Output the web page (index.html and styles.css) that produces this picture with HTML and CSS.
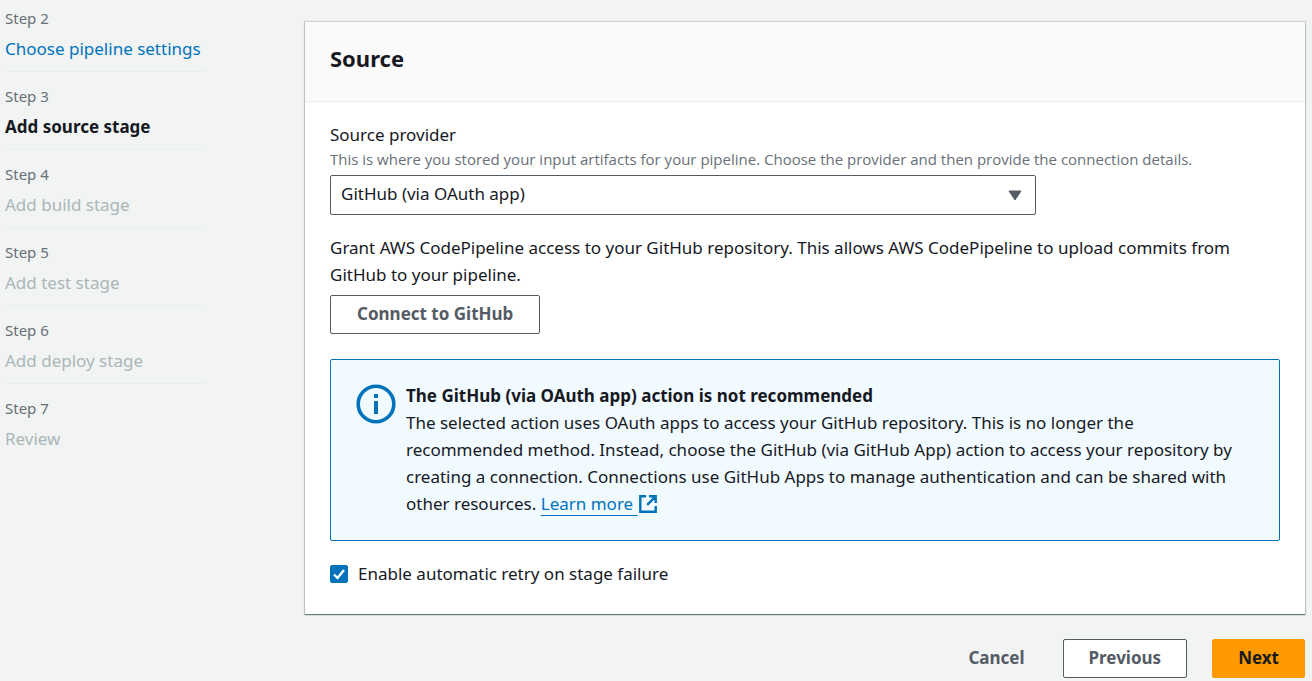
FILE: index.html
```html
<!DOCTYPE html>
<html lang="en">
<head>
<meta charset="utf-8">
<title>Add source stage</title>
<link rel="stylesheet" href="styles.css">
</head>
<body>
<div class="layout">
  <nav class="steps" aria-label="Steps">
    <ol class="step-list">
      <li class="step"><span class="step-label">Step 2</span><a class="step-name step-link" href="#settings">Choose pipeline settings</a></li>
      <li class="step" aria-current="step"><span class="step-label">Step 3</span><span class="step-name step-current">Add source stage</span></li>
      <li class="step"><span class="step-label">Step 4</span><span class="step-name">Add build stage</span></li>
      <li class="step"><span class="step-label">Step 5</span><span class="step-name">Add test stage</span></li>
      <li class="step"><span class="step-label">Step 6</span><span class="step-name">Add deploy stage</span></li>
      <li class="step"><span class="step-label">Step 7</span><span class="step-name">Review</span></li>
    </ol>
  </nav>
  <main class="main">
    <section class="card">
      <header class="card-header"><h2 class="card-title">Source</h2></header>
      <div class="card-body">
        <label class="field-label" for="provider">Source provider</label>
        <p class="hint" id="provider-hint">This is where you stored your input artifacts for your pipeline. Choose the provider and then provide the connection details.</p>
        <div class="select-wrap">
          <select class="select" id="provider" aria-describedby="provider-hint"><option>GitHub (via OAuth app)</option></select>
          <svg class="caret" width="14" height="11" viewBox="0 0 14 11" aria-hidden="true"><path d="M1 1h12L7 10z" fill="#545b64" stroke="#545b64" stroke-linejoin="round"/></svg>
        </div>
        <p class="text grant">Grant AWS CodePipeline access to your GitHub repository. This allows AWS CodePipeline to upload commits from GitHub to your pipeline.</p>
        <button class="button" type="button">Connect to GitHub</button>
        <div class="alert">
          <svg class="info" width="40" height="40" viewBox="0 0 40 40" aria-hidden="true"><circle cx="20" cy="20" r="17.8" fill="none" stroke="#0073bb" stroke-width="3.6"/><path d="M18 10h4v4h-4zM18 17h4v13h-4z" fill="#0073bb"/></svg>
          <div class="alert-content">
            <h3 class="alert-title">The GitHub (via OAuth app) action is not recommended</h3>
            <p class="text">The selected action uses OAuth apps to access your GitHub repository. This is no longer the recommended method. Instead, choose the GitHub (via GitHub App) action to access your repository by creating a connection. Connections use GitHub Apps to manage authentication and can be shared with other resources. <a class="learn" href="#learn">Learn more <svg class="external" width="20" height="20" viewBox="0 0 20 20" aria-hidden="true"><path d="M8 2.3H2.3v15.4h15.4V12M11 2.3h6.7V9M17.2 2.8l-8 8" fill="none" stroke="#0073bb" stroke-width="2.4"/></svg></a></p>
          </div>
        </div>
        <label class="check"><input class="check-input" type="checkbox" checked>Enable automatic retry on stage failure</label>
      </div>
    </section>
    <div class="actions">
      <button class="button button-plain" type="button">Cancel</button>
      <button class="button" type="button">Previous</button>
      <button class="button button-primary" type="button">Next</button>
    </div>
  </main>
</div>
</body>
</html>
```
FILE: styles.css
```css
* { box-sizing: border-box; }
body {
  margin: 0;
  background: #f2f3f3;
  color: #16191f;
  font-family: "Noto Sans", "Open Sans", sans-serif;
  font-size: 17px;
  line-height: 27px;
}
h2, h3, p, ol { margin: 0; padding: 0; }
.layout { display: flex; gap: 100px; padding: 0 7px 0 5px; }
.steps { flex: 0 0 200px; padding-top: 6px; }
.step-list { list-style: none; }
.step { display: flex; flex-direction: column; gap: 7px; padding-bottom: 10px; }
.step + .step { border-top: 1px solid #eaeded; padding-top: 12px; }
.step-label { font-size: 15px; line-height: 24px; color: #687078; }
.step-name { line-height: 24px; color: #aab7b8; white-space: nowrap; }
.step-link { color: #0073bb; text-decoration: none; }
.step-current { color: #16191f; font-weight: 700; }
.main { flex: 1; min-width: 0; padding-top: 22px; }
.card { background: #fff; box-shadow: 0 1px 1px 0 rgba(0, 28, 36, .5), 0 0 1px 1px rgba(0, 28, 36, .15); }
.card-header { padding: 21px 25px 27px; background: #fafafa; border-bottom: 1px solid #eaeded; }
.card-title { font-size: 22px; line-height: 31px; font-weight: 700; }
.card-body { padding: 19px 25px 27px; }
.field-label { display: block; }
.hint { font-family: "Open Sans", sans-serif; font-size: 15px; line-height: 22px; color: #687078; }
.select-wrap { display: grid; align-items: center; max-width: 706px; margin-top: 5px; }
.select {
  grid-area: 1 / 1;
  width: 100%;
  height: 40px;
  padding: 0 40px 3px 10px;
  border: 1px solid #545b64;
  border-radius: 2px;
  appearance: none;
  background: #fff;
  color: inherit;
  font: inherit;
}
.caret { grid-area: 1 / 1; justify-self: end; margin-right: 14px; pointer-events: none; }
.grant { margin: 19px 0 7px; }
.button {
  height: 39px;
  padding: 0 26px 2px;
  border: 1px solid #545b64;
  border-radius: 2px;
  background: #fff;
  color: #545b64;
  font: inherit;
  font-weight: 700;
  cursor: pointer;
}
.button-plain { border-color: transparent; background: transparent; }
.button-primary { border-color: #ff9900; background: #ff9900; color: #16191f; }
.alert {
  display: flex;
  gap: 10px;
  margin-top: 25px;
  padding: 22px 25px 23px;
  border: 1px solid #0073bb;
  border-radius: 2px;
  background: #f1faff;
}
.info { flex: none; margin-top: 2px; }
.alert-title { font-size: 17px; line-height: 27px; font-weight: 700; }
.learn { color: #0073bb; text-decoration: underline; text-decoration-thickness: 1px; text-underline-offset: 5px; white-space: nowrap; }
.external { vertical-align: -4px; }
.check { display: flex; align-items: center; gap: 10px; margin-top: 19px; }
.check-input {
  appearance: none;
  width: 18px;
  height: 18px;
  margin: 0;
  border-radius: 2px;
  background: #fff;
  border: 1px solid #687078;
}
.check-input:checked {
  border-color: #0073bb;
  background: #0073bb url("data:image/svg+xml,%3Csvg xmlns='http://www.w3.org/2000/svg' viewBox='0 0 16 16'%3E%3Cpath d='M3 8.5l3.5 3.5L13 4' fill='none' stroke='white' stroke-width='2.4'/%3E%3C/svg%3E") center / 16px 16px;
}
.actions { display: flex; justify-content: flex-end; gap: 25px; padding: 25px 0 3px; }
.actions .button { padding: 0 25px 2px; }
.actions .button-plain { padding: 0 12px 2px; }
```
